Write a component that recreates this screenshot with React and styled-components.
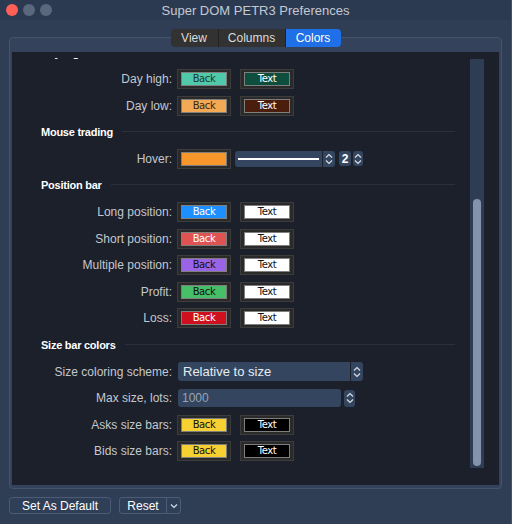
import React from "react";
import styled, { createGlobalStyle } from "styled-components";

const Global = createGlobalStyle`
  html, body { margin: 0; padding: 0; background: #2e3c54; }
  body { font-family: "Liberation Sans", Arial, sans-serif; }
  * { box-sizing: border-box; }
`;

const Window = styled.div`
  width: 512px;
  height: 524px;
  background: #2f3d55;
  display: flex;
  flex-direction: column;
  overflow: hidden;
  border-right: 1px solid #44536b;
`;

const TitleBar = styled.div`
  height: 20px;
  flex: none;
  display: flex;
  align-items: center;
  background: #2c3a51;
  padding-left: 6px;
`;

const Lights = styled.div`
  display: flex;
  gap: 5px;
`;

const Light = styled.span`
  width: 12px;
  height: 12px;
  border-radius: 50%;
  background: ${(p) => (p.$red ? "#fe5f57" : "#5a687e")};
`;

const Title = styled.div`
  flex: 1;
  text-align: center;
  margin-right: 52px;
  color: #c3c9d3;
  font-size: 13px;
`;

const Body = styled.div`
  padding: 9px 9px 0;
  display: flex;
  flex-direction: column;
`;

const Tabs = styled.div`
  display: flex;
  justify-content: center;
  height: 18px;
  margin-bottom: -10px;
  position: relative;
  z-index: 1;
`;

const Tab = styled.div`
  height: 18px;
  width: ${(p) => p.$w}px;
  display: flex;
  align-items: center;
  justify-content: center;
  font-size: 12px;
  color: ${(p) => (p.$active ? "#ffffff" : "#dcdcdc")};
  background: ${(p) => (p.$active ? "#1f6fe6" : "#323232")};
  border-left: ${(p) => (p.$first ? "none" : "1px solid #222")};
  border-radius: ${(p) => (p.$first ? "4px 0 0 4px" : p.$last ? "0 4px 4px 0" : "0")};
`;

const Group = styled.div`
  height: 452px;
  background: #34435b;
  border: 1px solid #44546c;
  border-radius: 4px;
  padding: 14px 2px 3px 2px;
  display: flex;
`;

const Panel = styled.div`
  flex: 1;
  background: #1b202b;
  display: flex;
  overflow: hidden;
`;

const Content = styled.div`
  flex: 1;
  overflow: hidden;
  margin-top: 6px;
`;

const Scroller = styled.div`
  display: flex;
  flex-direction: column;
  margin-top: -18.8px;
`;

const Heading = styled.div`
  height: 26.6px;
  display: flex;
  align-items: center;
  gap: 9px;
  padding: 0 15px 0 29px;
  color: #ffffff;
  font-weight: bold;
  font-size: 11px;
  letter-spacing: -0.25px;
  &::after {
    content: "";
    flex: 1;
    height: 1px;
    background: #2a303d;
    margin-top: -2px;
  }
`;

const Row = styled.div`
  height: 26.6px;
  display: flex;
  align-items: center;
`;

const Label = styled.div`
  width: 160px;
  text-align: right;
  color: #c4c8cf;
  font-size: 12px;
  flex: none;
`;

const SwatchBox = styled.div`
  width: 54px;
  height: 20px;
  margin-left: ${(p) => p.$ml}px;
  background: #2a2a2a;
  border: 1px solid #3c3c3c;
  padding: 2px 3px;
  display: flex;
`;

const SwatchFill = styled.div`
  flex: 1;
  background: ${(p) => p.$bg};
  border: 1px solid #7e7e7e;
  color: ${(p) => p.$fg};
  font-family: "DejaVu Sans", Verdana, sans-serif;
  font-size: 10px;
  letter-spacing: -0.4px;
  display: flex;
  align-items: center;
  justify-content: center;
  line-height: 1;
`;

const Combo = styled.div`
  width: ${(p) => p.$w}px;
  height: ${(p) => p.$h}px;
  margin-left: ${(p) => p.$ml}px;
  background: #34465f;
  border-radius: 3px;
  display: flex;
  align-items: center;
  color: #e8ebf0;
  font-size: 13px;
`;

const ComboValue = styled.div`
  flex: 1;
  display: flex;
  align-items: center;
  padding-left: ${(p) => p.$pl}px;
  color: ${(p) => (p.$muted ? "#9aa3b2" : "#e8ebf0")};
  font-size: ${(p) => p.$fs || 13}px;
`;

const LineSample = styled.div`
  flex: 1;
  height: 2px;
  background: #ffffff;
  margin: 0 3px;
`;

const ArrowCell = styled.div`
  width: ${(p) => p.$w}px;
  height: 100%;
  border-left: ${(p) => (p.$divider ? "1px solid #1b202b" : "none")};
  display: flex;
  align-items: center;
  justify-content: center;
`;

const SpinBox = styled.div`
  width: ${(p) => p.$w}px;
  height: ${(p) => p.$h}px;
  margin-left: ${(p) => p.$ml}px;
  background: #34465f;
  border-radius: 3px;
  display: flex;
  align-items: center;
  justify-content: center;
  color: #ffffff;
  font-size: 12px;
  font-weight: bold;
`;

const Scrollbar = styled.div`
  width: 14px;
  margin: 7px 15px 17px 0;
  background: #2e3c54;
  display: flex;
  flex-direction: column;
  justify-content: flex-end;
  padding: 2px 3px;
`;

const Thumb = styled.div`
  height: 267px;
  background: #8592ab;
  border-radius: 4px;
`;

const Footer = styled.div`
  display: flex;
  gap: 8px;
  margin-top: 8px;
`;

const Button = styled.div`
  height: 17px;
  width: ${(p) => p.$w}px;
  background: #2f3f58;
  border: 1px solid #4c5c76;
  border-radius: 3px;
  color: #ffffff;
  font-size: 12px;
  display: flex;
  align-items: center;
`;

const ButtonText = styled.div`
  flex: 1;
  text-align: center;
`;

const ButtonArrow = styled.div`
  width: 14px;
  height: 100%;
  border-left: 1px solid #4c5c76;
  display: flex;
  align-items: center;
  justify-content: center;
`;

const UpDown = () => (
  <svg width="8" height="12" viewBox="0 0 8 12">
    <path d="M1 4.5 L4 1.5 L7 4.5 M1 7.5 L4 10.5 L7 7.5" stroke="#d8dde6" strokeWidth="1.2" fill="none" />
  </svg>
);

const Chevron = () => (
  <svg width="8" height="6" viewBox="0 0 8 6">
    <path d="M1 1.5 L4 4.5 L7 1.5" stroke="#d8dde6" strokeWidth="1.2" fill="none" />
  </svg>
);

const Swatches = ({ back, text }) => (
  <>
    <SwatchBox $ml={5}>
      <SwatchFill $bg={back[0]} $fg={back[1]}>Back</SwatchFill>
    </SwatchBox>
    <SwatchBox $ml={9}>
      <SwatchFill $bg={text[0]} $fg={text[1]}>Text</SwatchFill>
    </SwatchBox>
  </>
);

const colorRows1 = [
  { label: "Day high:", back: ["#4fc9aa", "#1a3a33"], text: ["#0e4e3f", "#ffffff"] },
  { label: "Day low:", back: ["#f4a954", "#3a2a10"], text: ["#4b1d0c", "#ffffff"] },
];

const positionRows = [
  { label: "Long position:", back: ["#1e8ffe", "#ffffff"], text: ["#ffffff", "#111111"] },
  { label: "Short position:", back: ["#e05353", "#ffffff"], text: ["#ffffff", "#111111"] },
  { label: "Multiple position:", back: ["#9b64e6", "#111111"], text: ["#ffffff", "#111111"] },
  { label: "Profit:", back: ["#46bf68", "#111111"], text: ["#ffffff", "#111111"] },
  { label: "Loss:", back: ["#cf101f", "#ffffff"], text: ["#ffffff", "#111111"] },
];

const sizeRows = [
  { label: "Asks size bars:", back: ["#f7d031", "#111111"], text: ["#000000", "#ffffff"] },
  { label: "Bids size bars:", back: ["#f7d031", "#111111"], text: ["#000000", "#ffffff"] },
];

export default function App() {
  return (
    <>
      <Global />
      <Window>
        <TitleBar>
          <Lights>
            <Light $red />
            <Light />
            <Light />
          </Lights>
          <Title>Super DOM PETR3 Preferences</Title>
        </TitleBar>
        <Body>
          <Tabs>
            <Tab $w={47} $first>View</Tab>
            <Tab $w={67}>Columns</Tab>
            <Tab $w={56} $active $last>Colors</Tab>
          </Tabs>
          <Group>
            <Panel>
              <Content>
                <Scroller>
                  <Heading>Day high/low</Heading>
                  {colorRows1.map((r) => (
                    <Row key={r.label}>
                      <Label>{r.label}</Label>
                      <Swatches back={r.back} text={r.text} />
                    </Row>
                  ))}
                  <Heading>Mouse trading</Heading>
                  <Row>
                    <Label>Hover:</Label>
                    <SwatchBox $ml={5}>
                      <SwatchFill $bg="#f7962a" $fg="#111" />
                    </SwatchBox>
                    <Combo $w={100} $h={16} $ml={4}>
                      <LineSample />
                      <ArrowCell $w={13} $divider>
                        <UpDown />
                      </ArrowCell>
                    </Combo>
                    <SpinBox $w={12} $h={15} $ml={4}>2</SpinBox>
                    <SpinBox $w={10} $h={15} $ml={2}>
                      <UpDown />
                    </SpinBox>
                  </Row>
                  <Heading>Position bar</Heading>
                  {positionRows.map((r) => (
                    <Row key={r.label}>
                      <Label>{r.label}</Label>
                      <Swatches back={r.back} text={r.text} />
                    </Row>
                  ))}
                  <Heading>Size bar colors</Heading>
                  <Row>
                    <Label>Size coloring scheme:</Label>
                    <Combo $w={185} $h={19} $ml={6}>
                      <ComboValue $pl={5}>Relative to size</ComboValue>
                      <ArrowCell $w={13} $divider>
                        <UpDown />
                      </ArrowCell>
                    </Combo>
                  </Row>
                  <Row>
                    <Label>Max size, lots:</Label>
                    <Combo $w={163} $h={18} $ml={6}>
                      <ComboValue $pl={4} $muted $fs={12}>1000</ComboValue>
                    </Combo>
                    <SpinBox $w={11} $h={17} $ml={3}>
                      <UpDown />
                    </SpinBox>
                  </Row>
                  {sizeRows.map((r) => (
                    <Row key={r.label}>
                      <Label>{r.label}</Label>
                      <Swatches back={r.back} text={r.text} />
                    </Row>
                  ))}
                </Scroller>
              </Content>
              <Scrollbar>
                <Thumb />
              </Scrollbar>
            </Panel>
          </Group>
          <Footer>
            <Button $w={102}>
              <ButtonText>Set As Default</ButtonText>
            </Button>
            <Button $w={62}>
              <ButtonText>Reset</ButtonText>
              <ButtonArrow>
                <Chevron />
              </ButtonArrow>
            </Button>
          </Footer>
        </Body>
      </Window>
    </>
  );
}
